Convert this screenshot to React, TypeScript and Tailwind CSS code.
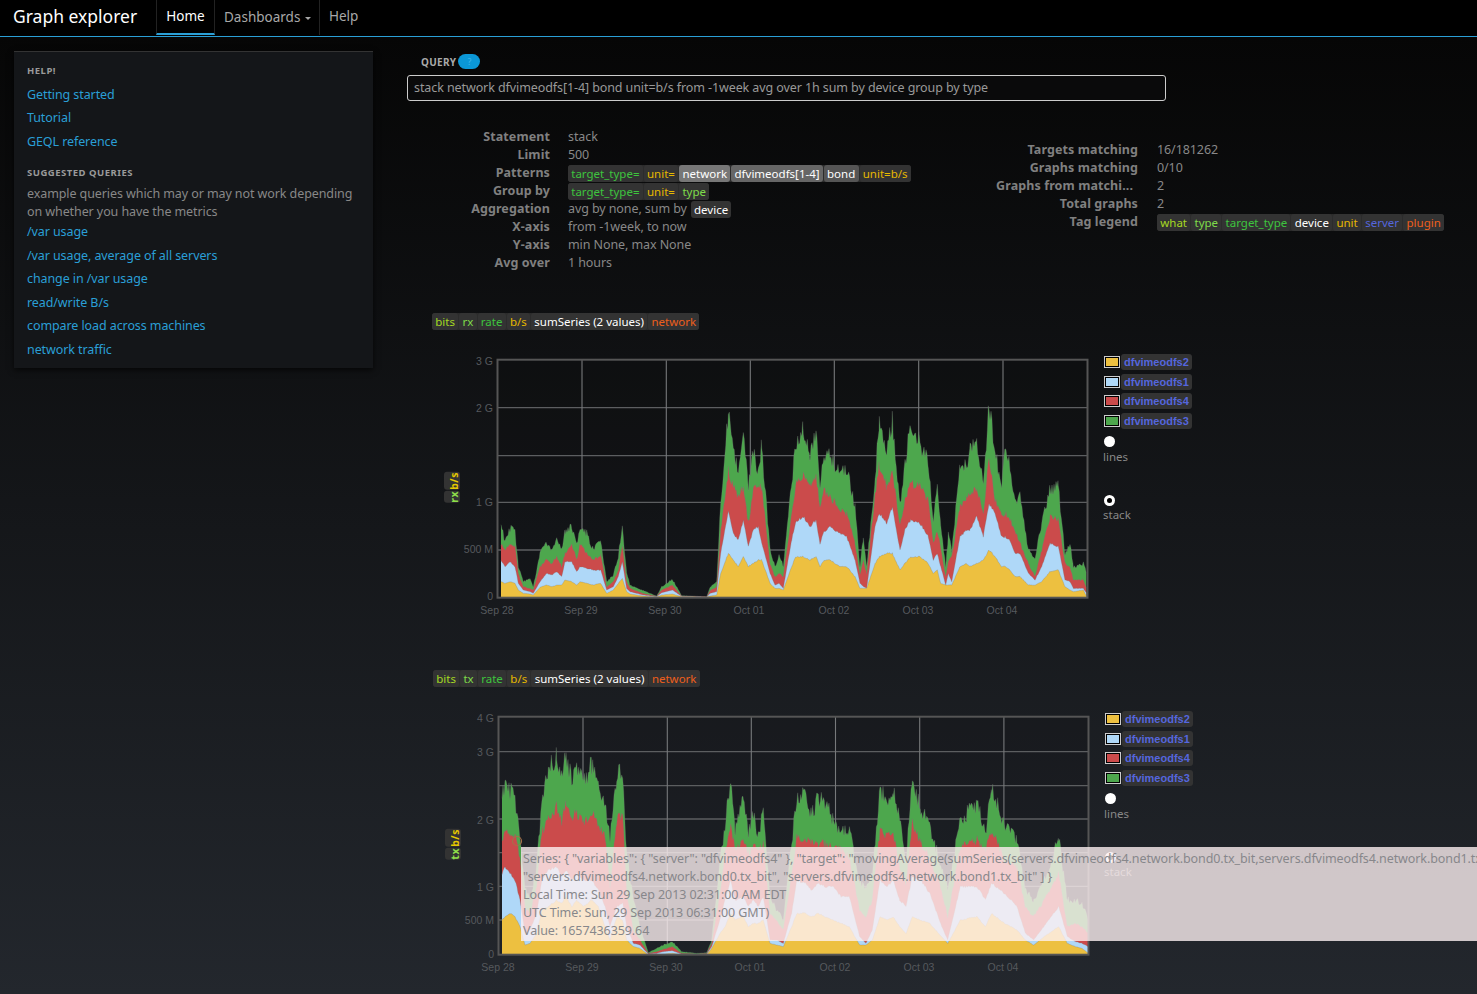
import type { ReactNode } from 'react'

type Pt = [number, number, number, number, number]

const COLORS = ['#4da74d', '#cb4b4b', '#afd8f8', '#edc040']

// rx traffic, points read off the graph: x, then the top edge of green, red, blue, yellow
const rxData: Pt[] = [
  [213, 560, 610, 660, 725], [225, 600, 630, 680, 730], [240, 565, 610, 665, 725], [255, 570, 620, 680, 730],
  [265, 680, 700, 730, 750], [280, 725, 740, 750, 760], [300, 715, 745, 755, 762], [310, 740, 750, 760, 765],
  [330, 640, 680, 725, 742], [350, 610, 660, 700, 735], [365, 630, 670, 705, 740], [380, 590, 650, 695, 735],
  [395, 630, 680, 710, 735], [405, 575, 640, 665, 720], [425, 560, 610, 665, 725], [440, 610, 660, 695, 735],
  [450, 565, 610, 680, 725], [470, 580, 640, 685, 730], [490, 630, 660, 690, 735], [512, 600, 645, 690, 730],
  [530, 725, 740, 750, 760], [550, 705, 725, 740, 750], [565, 650, 690, 710, 730], [577, 555, 615, 665, 715],
  [590, 700, 725, 745, 755], [600, 735, 745, 755, 762], [640, 752, 760, 765, 768], [680, 768, 769, 770, 771],
  [695, 740, 750, 758, 765], [727, 718, 735, 750, 762], [755, 767, 768, 769, 770], [830, 770, 770, 771, 771],
  [840, 742, 752, 760, 768], [860, 725, 740, 755, 765], [872, 480, 575, 640, 700], [895, 220, 390, 515, 640],
  [910, 320, 440, 580, 660], [925, 400, 470, 600, 680], [940, 280, 440, 540, 650], [955, 440, 550, 620, 680],
  [970, 330, 450, 570, 670], [985, 400, 440, 560, 660], [995, 315, 440, 610, 660], [1020, 630, 670, 700, 730],
  [1035, 680, 710, 735, 745], [1047, 645, 700, 730, 745], [1060, 680, 710, 745, 750], [1085, 430, 520, 600, 680],
  [1097, 310, 430, 545, 650], [1120, 270, 405, 530, 650], [1140, 340, 440, 560, 660], [1158, 275, 410, 540, 650],
  [1170, 440, 500, 610, 680], [1182, 335, 450, 575, 660], [1200, 350, 470, 560, 660], [1230, 400, 510, 580, 680],
  [1250, 390, 520, 590, 680], [1275, 500, 610, 660, 710], [1290, 680, 705, 730, 745], [1300, 590, 660, 740, 745],
  [1310, 680, 700, 745, 745], [1335, 410, 470, 560, 670], [1348, 240, 370, 520, 650], [1370, 340, 440, 550, 640],
  [1387, 240, 390, 500, 640], [1410, 500, 560, 630, 690], [1425, 380, 480, 570, 670], [1442, 240, 430, 540, 650],
  [1470, 310, 440, 550, 650], [1495, 360, 480, 590, 670], [1510, 540, 610, 660, 700], [1522, 440, 570, 640, 690],
  [1532, 550, 620, 680, 730], [1547, 680, 710, 735, 735], [1555, 580, 660, 700, 735], [1565, 630, 650, 725, 735],
  [1590, 380, 500, 590, 680], [1610, 370, 470, 570, 670], [1620, 330, 460, 570, 680], [1640, 295, 440, 530, 670],
  [1660, 430, 530, 590, 660], [1677, 195, 350, 490, 630], [1695, 340, 480, 520, 650], [1715, 430, 530, 590, 680],
  [1725, 340, 520, 590, 680], [1740, 380, 540, 600, 690], [1755, 490, 570, 640, 710], [1770, 470, 610, 640, 710],
  [1795, 630, 670, 700, 735], [1815, 650, 710, 720, 735], [1835, 550, 630, 680, 725], [1860, 450, 530, 610, 695],
  [1885, 440, 540, 620, 690], [1905, 640, 670, 720, 740], [1920, 610, 680, 725, 750], [1930, 680, 720, 745, 755],
  [1960, 670, 720, 745, 750], [1970, 700, 745, 760, 770],
]

const txData: Pt[] = [
  [216, 300, 430, 520, 660], [225, 235, 390, 500, 650], [240, 270, 400, 520, 640], [255, 290, 410, 540, 650],
  [270, 420, 470, 600, 680], [285, 560, 620, 700, 735], [300, 600, 640, 690, 730], [320, 500, 560, 640, 700],
  [335, 300, 400, 540, 630], [355, 210, 360, 510, 620], [380, 170, 320, 500, 600], [395, 230, 370, 530, 610],
  [408, 170, 300, 510, 590], [425, 240, 350, 540, 620], [440, 190, 340, 520, 600], [460, 250, 370, 540, 620],
  [485, 195, 340, 540, 600], [505, 260, 370, 570, 620], [525, 320, 410, 620, 680], [540, 420, 560, 680, 720],
  [560, 220, 360, 620, 650], [578, 210, 340, 610, 660], [590, 460, 580, 680, 720], [610, 600, 690, 730, 740],
  [630, 680, 720, 735, 745], [655, 758, 760, 762, 764], [680, 745, 755, 760, 764], [700, 735, 748, 755, 762],
  [727, 725, 740, 752, 760], [755, 755, 760, 762, 764], [800, 760, 762, 763, 764], [830, 758, 760, 762, 764],
  [845, 720, 730, 740, 745], [870, 480, 580, 660, 700], [885, 380, 460, 600, 680], [902, 230, 370, 540, 640],
  [915, 400, 450, 600, 660], [940, 300, 420, 590, 650], [955, 400, 460, 620, 680], [970, 340, 440, 600, 670],
  [985, 410, 450, 620, 670], [1000, 335, 430, 590, 660], [1020, 590, 640, 720, 730], [1040, 630, 660, 720, 735],
  [1060, 660, 690, 730, 740], [1085, 430, 520, 640, 680], [1100, 290, 410, 540, 640], [1125, 290, 420, 550, 640],
  [1145, 340, 430, 570, 650], [1165, 295, 430, 550, 640], [1185, 300, 430, 560, 650], [1208, 360, 440, 560, 660],
  [1233, 400, 450, 590, 670], [1258, 385, 470, 590, 680], [1289, 550, 630, 710, 735], [1308, 560, 650, 730, 735],
  [1327, 520, 600, 690, 720], [1350, 260, 390, 540, 650], [1371, 320, 410, 560, 660], [1390, 260, 400, 540, 650],
  [1409, 360, 500, 600, 680], [1428, 480, 550, 620, 700], [1447, 240, 370, 530, 650], [1472, 320, 430, 540, 660],
  [1499, 380, 470, 580, 670], [1535, 500, 570, 680, 710], [1553, 560, 650, 720, 730], [1591, 360, 440, 560, 660],
  [1641, 310, 420, 560, 650], [1666, 400, 450, 600, 680], [1685, 260, 390, 550, 640], [1723, 380, 480, 580, 670],
  [1761, 420, 500, 620, 690], [1786, 570, 620, 700, 720], [1811, 600, 650, 720, 735], [1849, 530, 590, 670, 705],
  [1886, 415, 520, 620, 680], [1912, 600, 680, 710, 730], [1937, 600, 670, 725, 740], [1956, 610, 680, 730, 745],
  [1975, 660, 700, 740, 760],
]

function noise(i: number, seed: number) {
  const v = Math.sin(i * 12.9898 + seed * 78.233) * 43758.5453
  return v - Math.floor(v)
}

// interpolate the read-off points and roughen them a bit
function bands(data: Pt[], base: number): Pt[] {
  const out: Pt[] = []
  for (let s = 0; s < data.length - 1; s++) {
    const a = data[s]
    const b = data[s + 1]
    for (let x = a[0]; x < b[0]; x += 3) {
      const t = (x - a[0]) / (b[0] - a[0])
      const row: number[] = [x]
      for (let k = 1; k <= 4; k++) {
        const y = a[k] + (b[k] - a[k]) * t
        const amp = (base - y) * (k === 1 ? 0.12 : k === 2 ? 0.08 : 0.035)
        row.push(Math.min(base, y + (noise(x, k % 3) - 0.5) * amp))
      }
      out.push(row as Pt)
    }
  }
  return out
}

function Tag({ color, bg = 'bg-[#333]', children }: { color: string; bg?: string; children: ReactNode }) {
  return <span className={`${bg} ${color} rounded-[3px] px-[3.25px] h-[17px] leading-[17px] text-[11.5px] tracking-normal whitespace-nowrap`}>{children}</span>
}

function TagRow({ children }: { children: ReactNode }) {
  return <div className="flex gap-px items-center bg-[#2c2c2c] rounded-[3px]">{children}</div>
}

function Chart({ data, ox, oy, base, hTicks, vTicks, yLabels, xLabels, marker }: {
  data: Pt[]
  ox: number
  oy: number
  base: number
  hTicks: number[]
  vTicks: number[]
  yLabels: [string, number][]
  xLabels: [string, number][]
  marker?: boolean
}) {
  const pts = bands(data, base)
  const px = (z: number) => (z / 3 + ox).toFixed(1)
  const py = (z: number) => (z / 3 + oy).toFixed(1)
  const left = 36.5
  const top = 9.7
  const right = left + 590
  const bottom = top + 238
  return (
    <svg width="640" height="270" className="shrink-0">
      <rect x={left} y={top} width={590} height={238} fill="#000" fillOpacity="0.1" />
      {hTicks.map((y) => <line key={y} x1={left} x2={right} y1={y} y2={y} stroke="#5c5e60" strokeWidth="1.3" />)}
      {vTicks.map((x) => <line key={x} x1={x} x2={x} y1={top} y2={bottom} stroke="#77797b" strokeWidth="1.1" />)}
      {COLORS.map((c, i) => {
        const line = pts.map((p) => `${px(p[0])},${py(p[i + 1])}`).join(' ')
        const first = px(pts[0][0])
        const last = px(pts[pts.length - 1][0])
        return (
          <g key={c}>
            <polygon points={`${first},${py(base)} ${line} ${last},${py(base)}`} fill={c} />
            <polyline points={line} fill="none" stroke="#777" strokeOpacity="0.45" strokeWidth="0.6" />
          </g>
        )
      })}
      <rect x={left} y={top} width={590} height={238} fill="none" stroke="#555" strokeWidth="2" />
      {yLabels.map(([t, y]) => (
        <text key={t} x={32} y={y} textAnchor="end" className="fill-[#56595d] text-[10.5px] tracking-normal font-['Liberation_Sans']">{t}</text>
      ))}
      {xLabels.map(([t, x]) => (
        <text key={t} x={x} y={264} textAnchor="middle" className="fill-[#56595d] text-[10.5px] tracking-normal font-['Liberation_Sans']">{t}</text>
      ))}
      {marker && <circle cx={55} cy={134} r={4.5} fill="none" stroke="#a5714a" strokeWidth="1.2" />}
    </svg>
  )
}

const servers = [
  ['dfvimeodfs2', 'bg-[#edc040]'],
  ['dfvimeodfs1', 'bg-[#afd8f8]'],
  ['dfvimeodfs4', 'bg-[#cb4b4b]'],
  ['dfvimeodfs3', 'bg-[#4da74d]'],
]

function Legend() {
  return (
    <div className="ml-[3px] mt-[4px] text-[#888] text-[11.5px] tracking-normal">
      {servers.map(([name, color]) => (
        <div key={name} className="flex items-center gap-px h-[16px] mb-[3.6px]">
          <div className="w-[16px] h-[12px] border border-[#ccc] bg-black p-px">
            <div className={`w-full h-full ${color}`} />
          </div>
          <span className="bg-[#333] rounded-[3px] px-[3px] h-[16px] leading-[16px] text-[11px] font-bold text-[#5566dd] font-['Liberation_Sans']">{name}</span>
        </div>
      ))}
      <div className="w-[11px] h-[11px] rounded-full bg-white mt-[7px]" />
      <div className="h-[18px] leading-[18px] mt-px -ml-px">lines</div>
      <div className="w-[11px] h-[11px] rounded-full bg-white mt-[29px] flex items-center justify-center">
        <div className="w-[5px] h-[5px] rounded-full bg-black" />
      </div>
      <div className="h-[18px] leading-[18px] -ml-px">stack</div>
    </div>
  )
}

function GraphBlock({ what, second, children }: { what: string; second?: boolean; children: ReactNode }) {
  return (
    <div className={second ? 'ml-[26px] mt-[50px]' : 'ml-[25px] mt-[41px]'}>
      <div className="flex">
        <TagRow>
          <Tag color="text-[#a6d922]">bits</Tag>
          <Tag color="text-[#7fdc4a]">{what}</Tag>
          <Tag color="text-[#3ec43e]">rate</Tag>
          <Tag color="text-[#e6b800]">b/s</Tag>
          <Tag color="text-white">sumSeries (2 values)</Tag>
          <Tag color="text-[#ee5f1c]">network</Tag>
        </TagRow>
      </div>
      <div className="flex mt-[20px] pl-[12px]">
        <div className="w-[16px] mr-px flex flex-col items-center justify-center gap-px pt-[5px]">
          <span className="[writing-mode:vertical-rl] rotate-180 bg-[#333] rounded-[3px] py-[5px] pl-[6px] w-[16px] leading-[10px] text-[10.5px] tracking-[0.5px] font-bold text-[#e6c800] text-center">b/s</span>
          <span className="[writing-mode:vertical-rl] rotate-180 bg-[#333] rounded-[3px] py-[5px] pl-[6px] w-[16px] leading-[10px] text-[10.5px] tracking-[0.5px] font-bold text-[#8fe04a] text-center">{what}</span>
        </div>
        {children}
        <Legend />
      </div>
    </div>
  )
}

function InfoRow({ label, width, children }: { label: string; width: string; children: ReactNode }) {
  return (
    <div className="flex h-[18px] leading-[18px]">
      <div className={`${width} text-right font-bold text-[#808080] tracking-[0.1px] whitespace-nowrap`}>{label}</div>
      <div className="ml-[18px] flex items-center gap-[4px]">{children}</div>
    </div>
  )
}

const helpLinks = ['Getting started', 'Tutorial', 'GEQL reference']
const queryLinks = ['/var usage', '/var usage, average of all servers', 'change in /var usage', 'read/write B/s', 'compare load across machines', 'network traffic']

export default function App() {
  return (
    <div className="relative h-screen overflow-hidden bg-[linear-gradient(#060606_37px,#23272d)] font-['Noto_Sans',sans-serif] text-[12.5px] tracking-[-0.09px] text-[#888]">
      <nav className="h-[37px] bg-black border-b border-[#2a9fd6] flex items-stretch tracking-normal">
        <div className="w-[156px] pl-[13px] text-[17.5px] text-white leading-[33px]">Graph explorer</div>
        <div className="w-[59px] border-x border-[#222] border-b-2 border-b-[#2a9fd6] h-[35px] text-white text-[13.5px] leading-[33px] text-center">Home</div>
        <div className="w-[105px] border-r border-[#222] h-[35px] text-[#a8a8a8] text-[13.5px] leading-[33px] pl-[9px] flex items-center gap-[5px]">
          Dashboards
          <span className="w-0 h-0 border-x-[3px] border-x-transparent border-t-[3px] border-t-[#a8a8a8] mt-px" />
        </div>
        <div className="pl-[9px] text-[#a8a8a8] text-[13.5px] leading-[33px]">Help</div>
      </nav>

      <div className="flex items-start">
        <aside className="ml-[14px] mt-[14px] w-[359px] shrink-0 bg-[#141619] border-t border-[#333] shadow-[0_2px_6px_rgba(0,0,0,0.7)] pl-[13px] pt-[10px] pb-[7px]">
          <h4 className="h-[18px] leading-[18px] text-[9.5px] font-bold uppercase tracking-[0.5px] text-[#9a9a9a]">Help!</h4>
          <ul className="mt-[2.5px]">
            {helpLinks.map((l) => <li key={l} className="h-[23.5px] leading-[23.5px] text-[#2a9fd6]">{l}</li>)}
          </ul>
          <h4 className="mt-[10.5px] h-[18px] leading-[18px] text-[9.5px] font-bold uppercase tracking-[0.5px] text-[#9a9a9a]">Suggested queries</h4>
          <p className="mt-[3px] leading-[18px] w-[335px]">example queries which may or may not work depending on whether you have the metrics</p>
          <ul className="-mt-[0.5px]">
            {queryLinks.map((l) => <li key={l} className="h-[23.5px] leading-[23.5px] text-[#2a9fd6]">{l}</li>)}
          </ul>
        </aside>

        <main className="ml-[34px] flex-1 min-w-0">
          <div className="mt-[17px] h-[15px] flex items-center pl-[14px] gap-[2px]">
            <span className="text-[10px] font-bold tracking-[0.3px] text-[#aaa] pt-px">QUERY</span>
            <span className="w-[22px] h-[15px] rounded-full bg-[#0b97d6] text-[#3fb6e6] text-[9px] leading-[15px] text-center">?</span>
          </div>
          <input readOnly value="stack network dfvimeodfs[1-4] bond unit=b/s from -1week avg over 1h sum by device group by type"
            className="block mt-[6px] w-[759px] h-[26px] border border-[#ccc] rounded-[3px] bg-[#0a0a0b] px-[6px] pb-[2px] text-[#999] outline-none" />

          <div className="flex items-start mt-[27px]">
            <div className="w-[581px] shrink-0">
              <InfoRow width="w-[143px]" label="Statement">stack</InfoRow>
              <InfoRow width="w-[143px]" label="Limit">500</InfoRow>
              <InfoRow width="w-[143px]" label="Patterns">
                <TagRow>
                  <Tag color="text-[#3ec43e]">target_type=</Tag>
                  <Tag color="text-[#e6b800]">unit=</Tag>
                  <Tag bg="bg-[#777]" color="text-white">network</Tag>
                  <Tag bg="bg-[#666]" color="text-white">dfvimeodfs[1-4]</Tag>
                  <Tag bg="bg-[#555]" color="text-white">bond</Tag>
                  <Tag color="text-[#e6b800]">unit=b/s</Tag>
                </TagRow>
              </InfoRow>
              <InfoRow width="w-[143px]" label="Group by">
                <TagRow>
                  <Tag color="text-[#3ec43e]">target_type=</Tag>
                  <Tag color="text-[#e6b800]">unit=</Tag>
                  <Tag color="text-[#7fdc4a]">type</Tag>
                </TagRow>
              </InfoRow>
              <InfoRow width="w-[143px]" label="Aggregation">
                avg by none, sum by
                <Tag color="text-white">device</Tag>
              </InfoRow>
              <InfoRow width="w-[143px]" label="X-axis">from -1week, to now</InfoRow>
              <InfoRow width="w-[143px]" label="Y-axis">min None, max None</InfoRow>
              <InfoRow width="w-[143px]" label="Avg over">1 hours</InfoRow>
            </div>
            <div className="mt-[13px]">
              <InfoRow width="w-[151px] pr-px" label="Targets matching">16/181262</InfoRow>
              <InfoRow width="w-[151px] pr-px" label="Graphs matching">0/10</InfoRow>
              <InfoRow width="w-[151px] pr-[6px]" label="Graphs from matchi...">2</InfoRow>
              <InfoRow width="w-[151px] pr-px" label="Total graphs">2</InfoRow>
              <InfoRow width="w-[151px] pr-px" label="Tag legend">
                <TagRow>
                  <Tag color="text-[#a6d922]">what</Tag>
                  <Tag color="text-[#7fdc4a]">type</Tag>
                  <Tag color="text-[#3ec43e]">target_type</Tag>
                  <Tag color="text-white">device</Tag>
                  <Tag color="text-[#e6b800]">unit</Tag>
                  <Tag color="text-[#5566dd]">server</Tag>
                  <Tag color="text-[#ee5f1c]">plugin</Tag>
                </TagRow>
              </InfoRow>
            </div>
          </div>

          <GraphBlock what="rx">
            <Chart
              data={rxData}
              ox={-31}
              oy={-10}
              base={772}
              hTicks={[57.7, 105.7, 152.3, 200]}
              vTicks={[121, 205.3, 289.3, 373.3, 457.7, 542]}
              yLabels={[['3 G', 15], ['2 G', 62], ['1 G', 156], ['500 M', 203], ['0', 250]]}
              xLabels={[['Sep 28', 36], ['Sep 29', 120], ['Sep 30', 204], ['Oct 01', 288], ['Oct 02', 373], ['Oct 03', 457], ['Oct 04', 541]]}
            />
          </GraphBlock>
          <GraphBlock what="tx" second>
            <Chart
              data={txData}
              ox={-32}
              oy={-7}
              base={763}
              hTicks={[44.7, 78.7, 112, 145.7, 179.3, 213]}
              vTicks={[121, 205.3, 289.3, 373.5, 457.7, 541.9]}
              yLabels={[['4 G', 15], ['3 G', 49], ['2 G', 117], ['1 G', 184], ['500 M', 217], ['0', 251]]}
              xLabels={[['Sep 28', 36], ['Sep 29', 120], ['Sep 30', 204], ['Oct 01', 288], ['Oct 02', 373], ['Oct 03', 457], ['Oct 04', 541]]}
              marker
            />
          </GraphBlock>
        </main>
      </div>

      <div className="absolute left-[521px] right-0 top-[847px] h-[94px] overflow-hidden bg-[rgba(253,240,241,0.8)] text-[#87878b] leading-[18px] pl-[2px] pt-[3px] whitespace-nowrap">
        <div>{'Series: { "variables": { "server": "dfvimeodfs4" }, "target": "movingAverage(sumSeries(servers.dfvimeodfs4.network.bond0.tx_bit,servers.dfvimeodfs4.network.bond1.tx_bit),"1h")", "targets": ['}</div>
        <div>{'"servers.dfvimeodfs4.network.bond0.tx_bit", "servers.dfvimeodfs4.network.bond1.tx_bit" ] }'}</div>
        <div>Local Time: Sun 29 Sep 2013 02:31:00 AM EDT</div>
        <div>UTC Time: Sun, 29 Sep 2013 06:31:00 GMT)</div>
        <div>Value: 1657436359.64</div>
      </div>
    </div>
  )
}
